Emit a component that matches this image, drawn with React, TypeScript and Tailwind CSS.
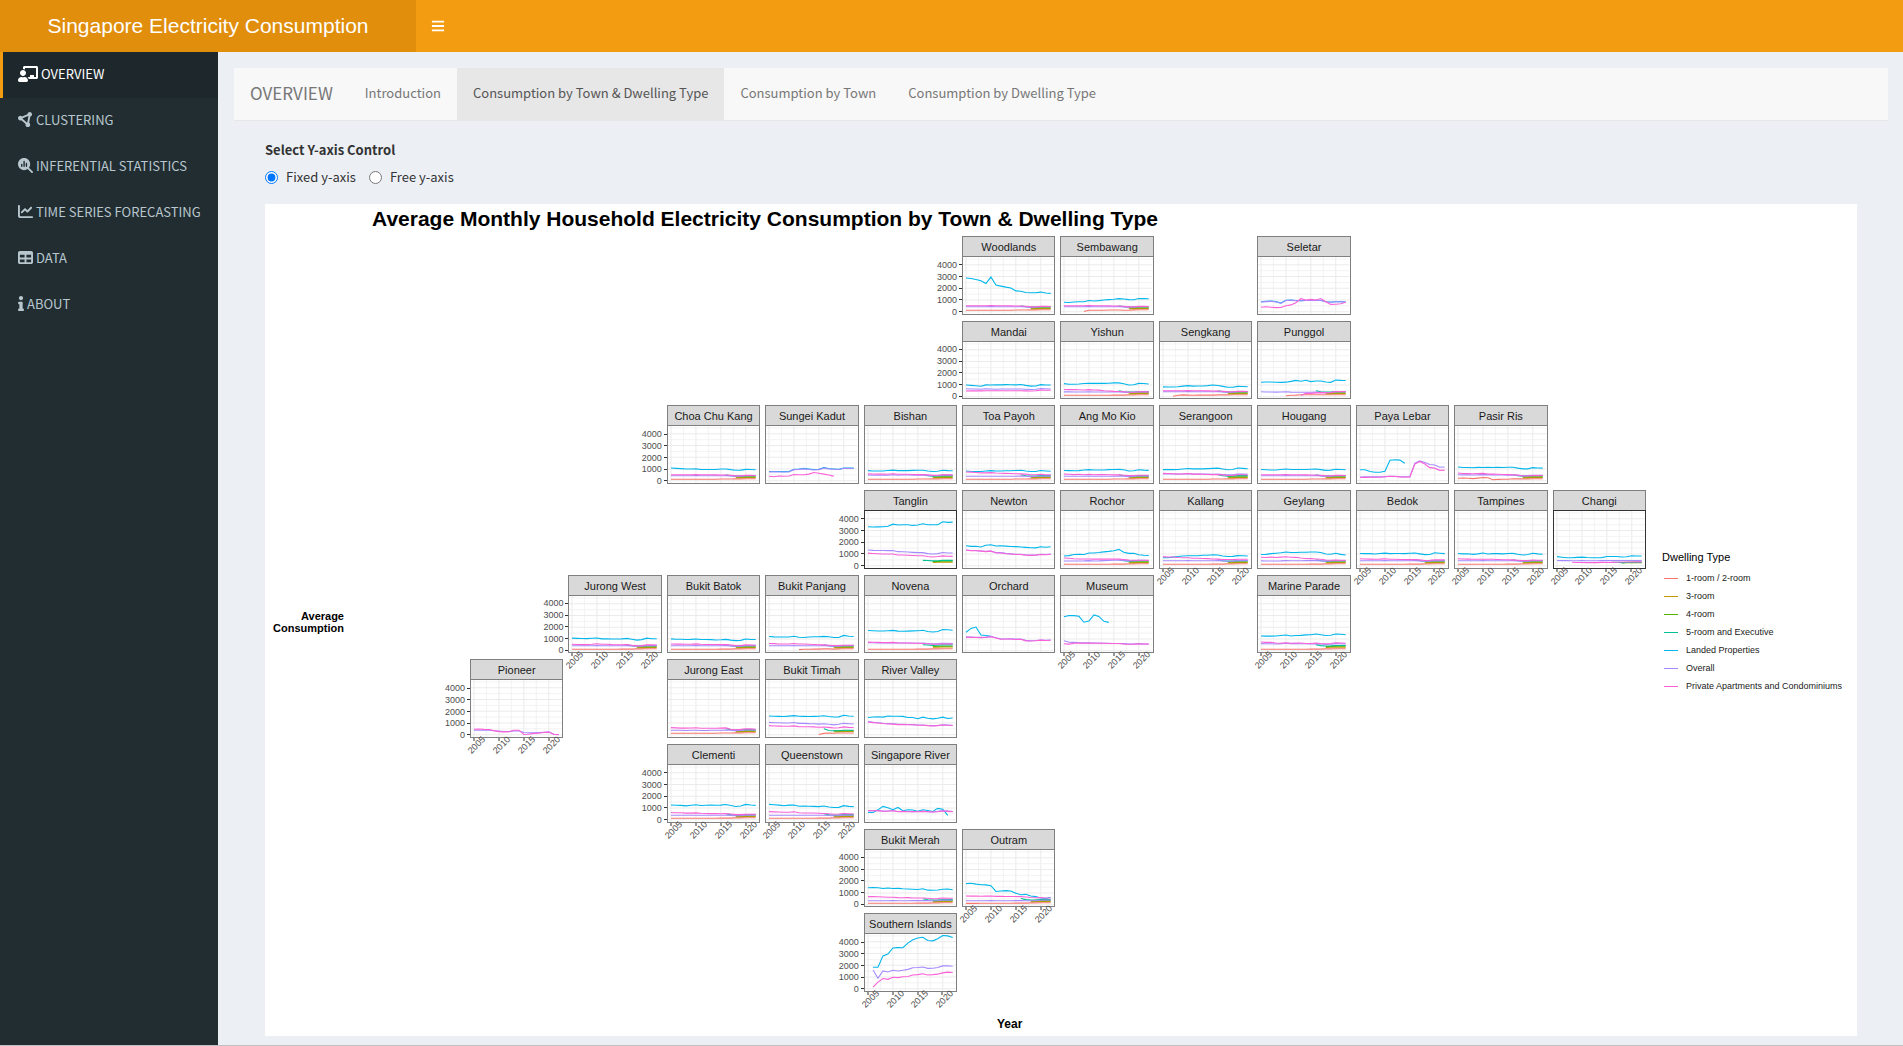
import { useId, useState } from 'react';
import { FaBars, FaChalkboardTeacher, FaInfo } from 'react-icons/fa';
import { FaCircleNodes, FaMagnifyingGlassChart, FaChartLine, FaTable } from 'react-icons/fa6';

type Pts = number[];
/** A run of yearly values; `from` is the first year. */
type Run = { from: number; v: Pts };
type Town = {
  name: string;
  col: number;
  row: number;
  landed?: Pts;
  landedFrom?: number;
  overall?: Pts;
  overallFrom?: number;
  priv?: Pts;
  privFrom?: number;
  /** 1-room values */
  one?: Pts;
  oneFrom?: number;
  /** values at 2016 and 2022 for 5-room, and the levels of 4-room and 3-room */
  hdb?: [number, number, number, number];
  yAxis?: boolean;
  xAxis?: boolean;
  dark?: boolean;
};

const COLORS = {
  one: '#F8766D',
  three: '#C49A00',
  four: '#53B400',
  five: '#00C094',
  landed: '#00B6EB',
  overall: '#A58AFF',
  priv: '#FB61D7',
};

const LEGEND = [
  ['1-room / 2-room', COLORS.one],
  ['3-room', COLORS.three],
  ['4-room', COLORS.four],
  ['5-room and Executive', COLORS.five],
  ['Landed Properties', COLORS.landed],
  ['Overall', COLORS.overall],
  ['Private Apartments and Condominiums', COLORS.priv],
];

const HDB: [number, number, number, number] = [500, 430, 340, 270];
const ONE: Pts = [120, 120, 120, 130, 120, 130, 120, 130, 130, 130, 140, 140, 140, 150, 150, 160, 160, 160];
const OVER: Pts = [420, 420, 415, 415, 420, 430, 415, 415, 420, 420, 420, 430, 410, 380, 390, 430, 440, 430];
const PRIV: Pts = [510, 510, 500, 500, 505, 530, 500, 500, 500, 490, 480, 480, 460, 410, 420, 450, 450, 440];

const TOWNS: Town[] = [
  { name: 'Woodlands', col: 6, row: 1, yAxis: true, hdb: HDB, one: ONE, overall: OVER, priv: PRIV,
    landed: [2880, 2830, 2740, 2640, 2400, 2950, 2270, 2180, 2100, 2030, 1770, 1750, 1640, 1610, 1610, 1670, 1590, 1560] },
  { name: 'Sembawang', col: 7, row: 1, hdb: HDB, one: [20, 120, 130, 130, 130, 140, 140, 140, 120, 130, 150, 160, 160, 160], oneFrom: 2009, overall: OVER, priv: PRIV,
    landed: [800, 790, 820, 840, 850, 960, 920, 940, 1000, 1030, 1060, 1110, 1080, 1030, 1020, 1120, 1110, 1100] },
  { name: 'Seletar', col: 9, row: 1,
    landed: [840, 880, 900, 860, 740, 980, 990, 960, 940, 950, 960, 970, 970, 850, 820, 850, 860, 830],
    overall: [820, 860, 880, 850, 700, 960, 970, 940, 930, 950, 960, 950, 960, 840, 800, 840, 850, 820],
    priv: [370, 420, 380, 350, 360, 500, 580, 760, 1110, 990, 1050, 990, 1120, 850, 620, 640, 680, 800] },
  { name: 'Mandai', col: 6, row: 2, yAxis: true,
    landed: [990, 970, 930, 890, 1010, 1000, 1010, 1010, 1030, 1020, 1010, 1040, 970, 900, 920, 1030, 990, 1000],
    overall: [680, 660, 650, 640, 670, 660, 640, 650, 650, 650, 650, 650, 640, 620, 640, 700, 680, 660],
    priv: [480, 490, 500, 490, 500, 510, 500, 500, 510, 510, 510, 510, 490, 480, 500, 560, 540, 550] },
  { name: 'Yishun', col: 7, row: 2, hdb: HDB, one: ONE, overall: [410, 410, 400, 400, 400, 420, 400, 400, 400, 400, 400, 410, 390, 370, 380, 420, 420, 410],
    priv: [610, 600, 600, 590, 580, 600, 570, 560, 500, 480, 450, 440, 420, 370, 370, 410, 420, 410],
    landed: [1110, 1060, 1060, 1080, 1130, 1140, 1140, 1140, 1140, 1150, 1180, 1180, 1100, 1000, 1020, 1140, 1120, 1090] },
  { name: 'Sengkang', col: 8, row: 2, hdb: HDB, one: [40, 130, 150, 140, 130, 140, 140, 140, 140, 150, 150, 150, 160, 160, 170, 170], oneFrom: 2007, overall: OVER, priv: PRIV,
    landed: [840, 830, 830, 850, 900, 940, 900, 920, 920, 940, 1000, 960, 880, 810, 810, 880, 870, 850] },
  { name: 'Punggol', col: 9, row: 2, hdb: HDB, one: [80, 130, 140, 160, 170, 170, 170, 170, 160, 160, 160, 160, 170], oneFrom: 2010, overall: [420, 400, 400, 390, 400, 420, 390, 380, 370, 370, 380, 400, 380, 360, 370, 430, 430, 420],
    priv: [100, 300, 280, 320, 350, 320, 350, 430, 440, 430], privFrom: 2013,
    landed: [1230, 1260, 1260, 1230, 1220, 1240, 1310, 1390, 1320, 1400, 1290, 1340, 1340, 1250, 1220, 1430, 1390, 1380] },
  { name: 'Choa Chu Kang', col: 3, row: 3, yAxis: true, hdb: HDB, one: ONE, overall: OVER, priv: PRIV,
    landed: [1080, 1050, 1030, 1000, 1000, 1010, 950, 960, 950, 950, 990, 1000, 940, 890, 900, 970, 950, 930] },
  { name: 'Sungei Kadut', col: 4, row: 3,
    landed: [780, 780, 780, 770, 780, 970, 1000, 1060, 1000, 950, 970, 1110, 1040, 1000, 970, 1070, 1070, 1070],
    overall: [750, 760, 750, 740, 740, 940, 970, 1010, 960, 920, 940, 1070, 1010, 980, 950, 1050, 1050, 1040],
    priv: [370, 340, 400, 380, 400, 530, 500, 510, 560, 700, 630, 560, 480, 390] },
  { name: 'Bishan', col: 5, row: 3, hdb: HDB, one: ONE, overall: [480, 470, 460, 460, 470, 500, 470, 480, 480, 470, 460, 480, 450, 420, 430, 480, 480, 460],
    priv: [580, 570, 560, 570, 550, 590, 540, 540, 540, 530, 520, 520, 500, 450, 460, 500, 490, 490],
    landed: [860, 820, 820, 820, 870, 900, 860, 860, 860, 880, 890, 890, 830, 790, 810, 890, 860, 850] },
  { name: 'Toa Payoh', col: 6, row: 3, hdb: HDB, one: ONE, overall: [370, 370, 370, 370, 370, 380, 370, 370, 380, 380, 380, 390, 370, 350, 360, 390, 400, 390],
    priv: [740, 730, 700, 660, 660, 690, 650, 640, 620, 610, 590, 580, 560, 500, 500, 540, 510, 510],
    landed: [830, 780, 790, 780, 830, 860, 830, 830, 840, 850, 870, 890, 830, 780, 790, 870, 830, 810] },
  { name: 'Ang Mo Kio', col: 7, row: 3, hdb: HDB, one: ONE, overall: [380, 380, 380, 370, 380, 400, 370, 370, 380, 380, 380, 400, 370, 350, 360, 400, 400, 390],
    priv: [560, 540, 520, 540, 510, 550, 500, 520, 530, 500, 490, 500, 470, 440, 440, 470, 460, 460],
    landed: [870, 860, 850, 860, 910, 940, 910, 910, 920, 940, 960, 970, 930, 820, 840, 930, 900, 880] },
  { name: 'Serangoon', col: 8, row: 3, hdb: HDB, one: ONE, overall: [580, 580, 570, 560, 570, 600, 560, 560, 560, 560, 550, 560, 530, 500, 510, 560, 560, 540],
    priv: [620, 610, 590, 570, 580, 610, 560, 560, 540, 530, 520, 520, 490, 440, 450, 500, 500, 480],
    landed: [940, 940, 940, 950, 1000, 1040, 1010, 1010, 1010, 1030, 1050, 1070, 1000, 930, 950, 1080, 1050, 1020] },
  { name: 'Hougang', col: 9, row: 3, hdb: HDB, one: ONE, overall: OVER, priv: PRIV,
    landed: [950, 930, 920, 910, 960, 1000, 950, 950, 950, 960, 980, 990, 940, 880, 900, 980, 950, 930] },
  { name: 'Paya Lebar', col: 10, row: 3,
    landed: [930, 930, 780, 720, 720, 800, 1740, 1780, 1760, 1490],
    overall: [310, 320, 320, 320, 330, 350, 370, 370, 330, 320, 330, 1490, 1690, 1550, 1380, 1330, 1150, 1170],
    priv: [270, 280, 290, 290, 300, 330, 370, 360, 320, 310, 320, 1420, 1640, 1420, 1110, 1070, 880, 900] },
  { name: 'Pasir Ris', col: 11, row: 3, hdb: HDB, one: [200, 230, 210, 180, 220, 270, 250, 80, 110, 120, 130, 160, 150, 150, 150, 160, 160, 160],
    overall: [500, 490, 490, 480, 490, 520, 490, 490, 480, 480, 460, 480, 450, 420, 430, 470, 460, 450],
    priv: [650, 610, 600, 590, 600, 620, 570, 560, 550, 530, 520, 510, 480, 400, 400, 430, 430, 440],
    landed: [1160, 1130, 1130, 1100, 1140, 1130, 1140, 1130, 1140, 1130, 1150, 1150, 1070, 1010, 1010, 1110, 1080, 1070] },
  { name: 'Tanglin', col: 5, row: 4, yAxis: true, dark: true, hdb: [450, 450, 370, 300],
    landed: [3320, 3300, 3310, 3330, 3370, 3550, 3470, 3500, 3500, 3440, 3480, 3580, 3500, 3500, 3500, 3750, 3700, 3720],
    overall: [1330, 1310, 1300, 1290, 1280, 1290, 1200, 1190, 1160, 1140, 1110, 1110, 1030, 1000, 1030, 1120, 1090, 1080],
    priv: [1070, 1040, 1020, 1000, 990, 990, 910, 910, 890, 870, 850, 850, 790, 750, 780, 840, 810, 800] },
  { name: 'Newton', col: 6, row: 4,
    landed: [1700, 1650, 1660, 1600, 1740, 1790, 1680, 1700, 1670, 1640, 1630, 1600, 1560, 1540, 1520, 1620, 1580, 1610],
    overall: [1340, 1290, 1290, 1260, 1230, 1260, 1120, 1110, 1050, 1010, 980, 970, 920, 900, 920, 980, 960, 990],
    priv: [1320, 1280, 1270, 1240, 1200, 1240, 1090, 1080, 1020, 990, 960, 950, 900, 880, 900, 960, 930, 980] },
  { name: 'Rochor', col: 7, row: 4, hdb: HDB, one: ONE, overall: [400, 400, 400, 400, 410, 430, 400, 410, 430, 440, 460, 470, 450, 410, 420, 450, 450, 440],
    priv: [650, 640, 590, 580, 570, 580, 560, 560, 560, 570, 560, 560, 530, 480, 460, 470, 460, 450],
    landed: [830, 860, 950, 980, 960, 1080, 1080, 1120, 1180, 1220, 1280, 1390, 1150, 1050, 1060, 930, 890, 870] },
  { name: 'Kallang', col: 8, row: 4, xAxis: true, hdb: HDB, one: ONE, overall: OVER,
    priv: [770, 740, 740, 700, 680, 680, 640, 640, 620, 600, 580, 560, 530, 530, 520, 550, 540, 540],
    landed: [680, 680, 730, 780, 820, 850, 850, 850, 890, 890, 930, 920, 820, 780, 800, 860, 850, 820] },
  { name: 'Geylang', col: 9, row: 4, hdb: HDB, one: ONE, overall: [410, 400, 400, 400, 410, 430, 420, 420, 420, 430, 430, 430, 410, 390, 400, 430, 430, 420],
    priv: [720, 700, 730, 700, 730, 760, 720, 710, 650, 620, 600, 570, 540, 480, 470, 480, 470, 450],
    landed: [950, 970, 1030, 1060, 1100, 1160, 1120, 1130, 1150, 1150, 1170, 1160, 1130, 990, 980, 1060, 970, 910] },
  { name: 'Bedok', col: 10, row: 4, xAxis: true, hdb: HDB, one: ONE, overall: OVER, priv: [590, 570, 560, 550, 560, 590, 540, 540, 530, 520, 520, 530, 490, 440, 450, 500, 490, 490],
    landed: [1040, 1030, 1030, 1000, 1040, 1070, 1030, 1040, 1040, 1030, 1060, 1080, 1010, 940, 960, 1100, 1060, 1030] },
  { name: 'Tampines', col: 11, row: 4, xAxis: true, hdb: HDB, one: ONE, overall: OVER, priv: [590, 570, 560, 540, 540, 550, 540, 540, 530, 510, 500, 490, 470, 430, 440, 480, 470, 460],
    landed: [1040, 1010, 1020, 970, 1010, 1080, 990, 1030, 1030, 1010, 1040, 1050, 980, 920, 950, 1060, 1010, 980] },
  { name: 'Changi', col: 12, row: 4, xAxis: true, dark: true, hdb: [300, 300, 260, 290],
    overall: [440, 430, 430, 420, 420, 430, 420, 420, 420, 430, 430, 440, 440, 440, 440, 440, 440, 440],
    priv: [290, 270, 270, 260, 270, 260, 280, 270, 280, 290, 310, 310, 310, 320, 320], privFrom: 2008,
    landed: [770, 720, 680, 680, 710, 730, 700, 680, 680, 690, 790, 790, 780, 740, 760, 850, 830, 820] },
  { name: 'Jurong West', col: 2, row: 5, yAxis: true, xAxis: true, hdb: HDB, one: ONE, overall: OVER, priv: [540, 530, 520, 520, 540, 590, 540, 540, 520, 510, 500, 530, 460, 410, 430, 500, 490, 480],
    landed: [1070, 1050, 1040, 1030, 1060, 1090, 1010, 1010, 1000, 990, 1010, 1050, 980, 900, 940, 1070, 1020, 1020] },
  { name: 'Bukit Batok', col: 3, row: 5, hdb: HDB, one: ONE, overall: OVER, priv: [570, 560, 560, 540, 540, 580, 540, 530, 530, 530, 520, 520, 480, 430, 440, 490, 480, 470],
    landed: [1010, 980, 980, 960, 970, 1000, 960, 960, 940, 920, 930, 970, 900, 860, 880, 990, 960, 950] },
  { name: 'Bukit Panjang', col: 4, row: 5, hdb: HDB, one: [90, 130, 130, 140, 140, 150, 150, 140, 150, 160, 160, 160], oneFrom: 2011, overall: OVER, priv: [610, 600, 570, 570, 580, 620, 570, 570, 550, 530, 510, 490, 470, 430, 430, 470, 460, 460],
    landed: [1210, 1180, 1170, 1160, 1160, 1230, 1150, 1120, 1160, 1190, 1190, 1220, 1190, 1130, 1130, 1310, 1230, 1210] },
  { name: 'Novena', col: 5, row: 5, hdb: [500, 490, 380, 310], one: ONE, overall: [690, 680, 670, 680, 660, 680, 660, 650, 650, 650, 640, 650, 620, 590, 600, 640, 640, 620],
    priv: [730, 720, 710, 690, 690, 710, 670, 660, 650, 640, 630, 620, 590, 550, 550, 590, 570, 560],
    landed: [1720, 1700, 1680, 1680, 1710, 1730, 1670, 1660, 1670, 1690, 1700, 1740, 1640, 1600, 1640, 1810, 1780, 1740] },
  { name: 'Orchard', col: 6, row: 5,
    landed: [1570, 1900, 2020, 1340, 1300, 1240],
    overall: [1180, 1170, 1150, 1140, 1160, 1220, 1100, 1010, 1000, 1020, 990, 990, 880, 850, 870, 920, 890, 910],
    priv: [1150, 1140, 1120, 1110, 1130, 1190, 1080, 980, 990, 990, 960, 970, 840, 830, 850, 900, 870, 890] },
  { name: 'Museum', col: 7, row: 5, xAxis: true,
    landed: [2900, 3000, 3000, 2940, 2430, 2530, 3060, 2930, 2500, 2420],
    overall: [840, 720, 710, 680, 670, 670, 650, 660, 640, 630, 620, 610, 600, 560, 570, 600, 580, 570],
    priv: [590, 560, 640, 650, 640, 650, 640, 640, 630, 610, 610, 620, 580, 540, 560, 590, 580, 560] },
  { name: 'Marine Parade', col: 9, row: 5, xAxis: true, hdb: [520, 440, 370, 300], one: ONE, overall: [600, 590, 590, 580, 600, 640, 600, 600, 590, 590, 580, 600, 570, 530, 540, 600, 590, 570],
    priv: [740, 710, 710, 650, 640, 680, 640, 650, 650, 610, 620, 650, 610, 590, 610, 680, 650, 640],
    landed: [1250, 1240, 1240, 1250, 1290, 1330, 1260, 1300, 1310, 1350, 1370, 1420, 1360, 1300, 1320, 1430, 1400, 1370] },
  { name: 'Pioneer', col: 1, row: 6, yAxis: true, xAxis: true,
    overall: [380, 380, 380, 370, 340, 310, 270, 260, 310, 330, 180, 150, 170, 190, 210, 240, 30, 0],
    priv: [470, 480, 450, 440, 350, 260, 240, 250, 370, 380, 20, 40, 110, 130, 180, 220, 30, 0] },
  { name: 'Jurong East', col: 3, row: 6, hdb: HDB, one: ONE, overall: [380, 370, 370, 360, 370, 380, 360, 360, 370, 370, 370, 390, 370, 350, 360, 400, 400, 380],
    priv: [600, 580, 560, 560, 570, 590, 540, 540, 550, 550, 560, 580, 460, 420, 450, 500, 490, 470] },
  { name: 'Bukit Timah', col: 4, row: 6, hdb: [500, 370, 340, 270], one: [20, 110, 140, 130, 140, 140, 140, 140], oneFrom: 2015,
    landed: [1600, 1580, 1560, 1550, 1590, 1630, 1570, 1560, 1550, 1560, 1580, 1610, 1550, 1510, 1520, 1660, 1600, 1580],
    overall: [1050, 1020, 1020, 990, 1000, 1040, 970, 970, 940, 930, 900, 930, 880, 840, 880, 970, 930, 910],
    priv: [770, 740, 730, 710, 710, 750, 690, 680, 670, 660, 640, 650, 620, 570, 590, 660, 620, 610] },
  { name: 'River Valley', col: 5, row: 6,
    landed: [1460, 1510, 1530, 1500, 1590, 1570, 1580, 1560, 1470, 1470, 1370, 1490, 1400, 1350, 1400, 1490, 1380, 1420],
    overall: [1110, 1060, 1020, 980, 950, 930, 880, 880, 870, 860, 830, 830, 790, 770, 790, 850, 820, 810],
    priv: [1080, 1030, 1000, 950, 920, 900, 860, 860, 850, 840, 810, 810, 770, 750, 770, 830, 800, 780] },
  { name: 'Clementi', col: 3, row: 7, yAxis: true, xAxis: true, hdb: HDB, one: ONE, overall: [370, 370, 370, 370, 370, 380, 370, 370, 370, 370, 370, 380, 360, 340, 350, 390, 390, 370],
    priv: [620, 590, 590, 560, 560, 580, 540, 530, 520, 520, 510, 520, 480, 430, 430, 470, 460, 450],
    landed: [1260, 1230, 1220, 1180, 1230, 1270, 1210, 1230, 1240, 1230, 1240, 1290, 1210, 1130, 1160, 1310, 1250, 1220] },
  { name: 'Queenstown', col: 4, row: 7, xAxis: true, hdb: HDB, one: ONE, overall: [370, 370, 370, 370, 370, 380, 370, 370, 370, 370, 370, 380, 360, 340, 350, 390, 390, 370],
    priv: [690, 670, 660, 640, 630, 670, 590, 580, 580, 570, 550, 530, 500, 470, 480, 520, 500, 480],
    landed: [1310, 1270, 1240, 1190, 1240, 1260, 1150, 1160, 1150, 1140, 1110, 1160, 1090, 1040, 1050, 1200, 1140, 1110] },
  { name: 'Singapore River', col: 5, row: 7,
    landed: [620, 610, 840, 1140, 1020, 860, 1040, 760, 850, 820, 720, 850, 790, 700, 970, 890, 370],
    overall: [750, 770, 770, 730, 740, 780, 700, 720, 700, 690, 700, 720, 690, 660, 710, 770, 730, 700],
    priv: [780, 760, 760, 720, 720, 760, 680, 710, 680, 690, 680, 710, 680, 650, 680, 750, 710, 690] },
  { name: 'Bukit Merah', col: 5, row: 8, yAxis: true, hdb: HDB, one: ONE, overall: [340, 340, 340, 340, 340, 350, 340, 340, 340, 350, 350, 360, 350, 330, 340, 390, 390, 380],
    priv: [690, 690, 680, 660, 640, 640, 600, 590, 600, 580, 570, 570, 550, 500, 520, 570, 550, 550],
    landed: [1440, 1460, 1440, 1380, 1420, 1380, 1390, 1360, 1340, 1320, 1300, 1360, 1240, 1230, 1260, 1320, 1340, 1280] },
  { name: 'Outram', col: 6, row: 8, xAxis: true, hdb: [530, 440, 350, 280], one: [110, 110, 110, 120, 120, 130, 120, 130, 130, 130, 140, 140, 140, 150, 150, 160, 160, 160], overall: [340, 340, 340, 340, 340, 350, 340, 340, 340, 340, 350, 350, 340, 340, 350, 380, 390, 380],
    priv: [740, 730, 740, 720, 730, 740, 710, 720, 700, 700, 700, 690, 650, 610, 590, 600, 580, 580],
    landed: [1800, 1830, 1760, 1710, 1690, 1620, 1130, 1160, 1200, 1170, 980, 850, 880, 740, 690, 570, 530, 640] },
  { name: 'Southern Islands', col: 5, row: 9, yAxis: true, xAxis: true,
    landed: [1830, 1830, 2800, 2950, 3470, 3510, 3500, 3890, 4180, 4320, 4390, 4120, 4080, 4260, 4540, 4510, 4360], landedFrom: 2006,
    overall: [1600, 890, 1510, 1430, 1570, 1510, 1580, 1650, 1780, 1810, 1850, 1730, 1740, 1810, 1940, 1960, 1910], overallFrom: 2006,
    priv: [130, 560, 870, 800, 980, 940, 1020, 1040, 1160, 1200, 1270, 1170, 1200, 1240, 1350, 1410, 1380], privFrom: 2006 },
];

const YEARS = [2005, 2010, 2015, 2020];
const LEVELS = [0, 1000, 2000, 3000, 4000];
const PANEL_W = 91;
const PANEL_H = 57;
const px = (year: number) => 3 + (year - 2005) * 4.96;
const py = (value: number) => 55 - value * 0.01178;
const path = ({ from, v }: Run) => v.map((n, i) => `${px(from + i).toFixed(1)},${py(n).toFixed(1)}`).join(' ');

function Lines({ town }: { town: Town }) {
  const runs: [string, Run][] = [];
  if (town.one) runs.push([COLORS.one, { from: town.oneFrom ?? 2005, v: town.one }]);
  if (town.hdb) {
    const [a, b, four, three] = town.hdb;
    runs.push([COLORS.three, { from: 2018, v: [three - 20, three - 10, three, three, three] }]);
    runs.push([COLORS.four, { from: 2018, v: [four - 20, four - 10, four, four, four] }]);
    runs.push([COLORS.five, { from: 2016, v: [a, b - 10, b - 40, b - 30, b, b, b] }]);
  }
  if (town.landed) runs.push([COLORS.landed, { from: town.landedFrom ?? 2005, v: town.landed }]);
  if (town.overall) runs.push([COLORS.overall, { from: town.overallFrom ?? 2005, v: town.overall }]);
  if (town.priv) runs.push([COLORS.priv, { from: town.privFrom ?? 2005, v: town.priv }]);
  return (
    <svg viewBox={`0 0 ${PANEL_W} ${PANEL_H}`} preserveAspectRatio="none" className="absolute inset-0 h-full w-full" aria-hidden="true">
      <g stroke="#ebebeb" fill="none">
        {[500, 1500, 2500, 3500, 4500].map((v) => (
          <line key={v} x1={0} x2={PANEL_W} y1={py(v)} y2={py(v)} strokeWidth={0.6} />
        ))}
        {[2007.5, 2012.5, 2017.5].map((y) => (
          <line key={y} x1={px(y)} x2={px(y)} y1={0} y2={PANEL_H} strokeWidth={0.6} />
        ))}
        {LEVELS.map((v) => (
          <line key={v} x1={0} x2={PANEL_W} y1={py(v)} y2={py(v)} />
        ))}
        {YEARS.map((y) => (
          <line key={y} x1={px(y)} x2={px(y)} y1={0} y2={PANEL_H} />
        ))}
      </g>
      {runs.map(([color, run], i) => (
        <polyline key={i} points={path(run)} fill="none" stroke={color} strokeWidth={1.1} />
      ))}
    </svg>
  );
}

function Facet({ town }: { town: Town }) {
  return (
    <figure
      className="flex min-h-0 min-w-0 flex-col"
      style={{ gridColumn: town.col, gridRow: town.row }}
    >
      <figcaption className="h-5 shrink-0 whitespace-nowrap border border-b-0 border-[#7f7f7f] bg-[#d9d9d9] text-center text-[11px] leading-5 text-[#1a1a1a]">
        {town.name}
      </figcaption>
      <div className={town.dark ? 'relative min-h-0 flex-1 border border-[#333333]' : 'relative min-h-0 flex-1 border border-[#7f7f7f]'}>
        <Lines town={town} />
        {town.yAxis &&
          LEVELS.map((v) => (
            <span
              key={v}
              className="absolute right-full mr-px flex h-3 -translate-y-1/2 items-center gap-0.5 text-[9px] leading-3 text-[#4d4d4d]"
              style={{ top: `${(py(v) / PANEL_H) * 100}%` }}
            >
              {v}
              <i className="h-px w-[3px] bg-[#333333]" />
            </span>
          ))}
        {town.xAxis &&
          YEARS.map((y) => (
            <span
              key={y}
              className="absolute top-full mt-px h-[3px] w-px -translate-x-1/2 bg-[#333333]"
              style={{ left: `${(px(y) / PANEL_W) * 100}%` }}
            >
              <span className="absolute right-[-12px] top-px origin-center -rotate-45 text-[9px] leading-3 text-[#4d4d4d]">{y}</span>
            </span>
          ))}
      </div>
    </figure>
  );
}

const MENU = [
  { label: 'OVERVIEW', Icon: FaChalkboardTeacher, size: 'h-4 w-5' },
  { label: 'CLUSTERING', Icon: FaCircleNodes, size: 'size-[15px]' },
  { label: 'INFERENTIAL STATISTICS', Icon: FaMagnifyingGlassChart, size: 'size-[15px]' },
  { label: 'TIME SERIES FORECASTING', Icon: FaChartLine, size: 'size-[15px]' },
  { label: 'DATA', Icon: FaTable, size: 'size-[15px]' },
  { label: 'ABOUT', Icon: FaInfo, size: 'h-[15px] w-[6px]' },
];

const TABS = ['Introduction', 'Consumption by Town & Dwelling Type', 'Consumption by Town', 'Consumption by Dwelling Type'];

export default function App() {
  const id = useId();
  const [axis, setAxis] = useState('fixed');
  return (
    <div className="flex min-h-screen flex-col border-b border-[#c0c0c0] bg-[#ecf0f5] font-['Noto_Sans_CJK_SC',sans-serif] text-[13px] leading-5 text-[#333333]">
      <header className="flex h-[52px] shrink-0 bg-[#f39c12] text-white">
        <a href="#" className="flex w-[416px] items-center justify-center bg-[#e08e0b] font-['Liberation_Sans',sans-serif] text-[21px]">
          Singapore Electricity Consumption
        </a>
        <button type="button" aria-label="Toggle navigation" className="px-[15px]">
          <FaBars className="size-[14px]" />
        </button>
      </header>
      <div className="flex flex-1">
        <nav className="w-[218px] shrink-0 bg-[#222d32]">
          <ul>
            {MENU.map(({ label, Icon, size }, i) => (
              <li key={label}>
                <a
                  href="#"
                  className={
                    i === 0
                      ? 'flex h-[46px] items-center gap-[3px] whitespace-nowrap border-l-[3px] border-[#f39c12] bg-[#1e282c] pb-[3px] pl-[15px] text-white'
                      : 'flex h-[46px] items-center gap-[3px] whitespace-nowrap border-l-[3px] border-transparent pb-[3px] pl-[15px] text-[#b8c7ce]'
                  }
                >
                  <Icon className={size} />
                  {label}
                </a>
              </li>
            ))}
          </ul>
        </nav>
        <main className="flex min-w-0 flex-1 flex-col pl-4 pr-[15px] pt-4">
          <nav className="flex h-[53px] shrink-0 border-b border-[#e7e7e7] bg-[#f8f8f8] text-[#777777]">
            <a href="#" className="flex items-center px-4 pb-[3px] text-[17px]">OVERVIEW</a>
            {TABS.map((t, i) => (
              <a
                key={t}
                href="#"
                className={i === 1 ? 'flex items-center bg-[#e7e7e7] px-4 pb-[3px] text-[#555555]' : 'flex items-center px-4 pb-[3px]'}
              >
                {t}
              </a>
            ))}
          </nav>
          <div className="px-[31px] pt-[19px]">
            <fieldset>
              <legend className="font-bold">Select Y-axis Control</legend>
              <div className="mt-[7px] flex gap-[13px]">
                {[['fixed', 'Fixed y-axis'], ['free', 'Free y-axis']].map(([value, label]) => (
                  <label key={value} htmlFor={id + value} className="flex items-center gap-2">
                    <input
                      id={id + value}
                      type="radio"
                      name={id}
                      checked={axis === value}
                      onChange={() => setAxis(value)}
                      className="size-[13px]"
                    />
                    {label}
                  </label>
                ))}
              </div>
            </fieldset>
            <section className="mt-[17px] bg-white font-['Liberation_Sans',sans-serif] text-black">
              <h1 className="pl-[107px] pt-[2px] text-[21px] font-bold leading-[26px]">
                Average Monthly Household Electricity Consumption by Town &amp; Dwelling Type
              </h1>
              <div className="mt-1 flex items-center">
                <p className="mt-4 w-[79px] shrink-0 text-right text-[11px] font-bold leading-3">
                  Average Consumption
                </p>
                <div className="ml-[126px] grid h-[756px] min-w-0 flex-1 auto-rows-fr grid-cols-12 gap-x-[5px] gap-y-[6px]">
                  {TOWNS.map((t) => (
                    <Facet key={t.name} town={t} />
                  ))}
                </div>
                <div className="ml-4 mt-4 w-[195px] shrink-0">
                  <h2 className="text-[11px] leading-4">Dwelling Type</h2>
                  <ul className="mt-1">
                    {LEGEND.map(([label, color]) => (
                      <li key={label} className="flex h-[18px] items-center gap-2 whitespace-nowrap text-[9px] text-[#1a1a1a]">
                        <i className="ml-0.5 h-px w-[14px]" style={{ backgroundColor: color }} />
                        {label}
                      </li>
                    ))}
                  </ul>
                </div>
              </div>
              <p className="pb-1 pl-[732px] pt-6 text-[12px] font-bold leading-4">Year</p>
            </section>
          </div>
        </main>
      </div>
    </div>
  );
}
